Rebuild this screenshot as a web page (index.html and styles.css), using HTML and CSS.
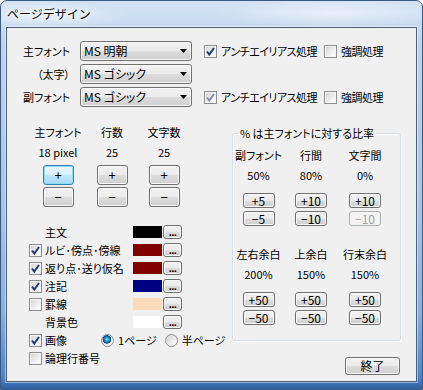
FILE: index.html
```html
<!DOCTYPE html>
<html lang="ja">
<head>
    <meta charset="UTF-8">
    <title>ページデザイン</title>
    <link rel="stylesheet" href="styles.css">
</head>
<body>
    <div class="window">
        <div class="titlebar">ページデザイン</div>
        <div class="client">
            <div class="fonts">
                <span class="lbl">主フォント</span>
                <div class="combo"><span>MS 明朝</span><svg width="7" height="4" viewBox="0 0 7 4"><path d="M0 0H7L3.5 4Z" fill="#000"/></svg></div>
                <label class="check"><span class="box"><svg width="11" height="11" viewBox="0 0 11 11"><path d="M2 5.5L4.3 8.5L9 2" fill="none" stroke="#1f3a73" stroke-width="2"/></svg></span>アンチエイリアス処理</label>
                <label class="check"><span class="box"></span>強調処理</label>

                <span class="lbl">（太字）</span>
                <div class="combo"><span>MS ゴシック</span><svg width="7" height="4" viewBox="0 0 7 4"><path d="M0 0H7L3.5 4Z" fill="#000"/></svg></div>
                <span></span>
                <span></span>

                <span class="lbl">副フォント</span>
                <div class="combo"><span>MS ゴシック</span><svg width="7" height="4" viewBox="0 0 7 4"><path d="M0 0H7L3.5 4Z" fill="#000"/></svg></div>
                <label class="check"><span class="box"><svg width="11" height="11" viewBox="0 0 11 11"><path d="M2 5.5L4.3 8.5L9 2" fill="none" stroke="#7f8fad" stroke-width="2"/></svg></span>アンチエイリアス処理</label>
                <label class="check"><span class="box"></span>強調処理</label>
            </div>

            <div class="main">
                <div class="left">
                    <div class="counters">
                        <span>主フォント</span>
                        <span>行数</span>
                        <span>文字数</span>
                        <span>18 pixel</span>
                        <span>25</span>
                        <span>25</span>
                        <div class="pair"><button class="btn big focus">+</button><button class="btn big">−</button></div>
                        <div class="pair"><button class="btn big">+</button><button class="btn big">−</button></div>
                        <div class="pair"><button class="btn big">+</button><button class="btn big">−</button></div>
                    </div>

                    <div class="colors">
                        <div class="row"><span class="slot"></span><span class="name">主文</span><span class="swatch" style="background:#000000"></span><button class="btn more">...</button></div>
                        <div class="row"><span class="slot"><span class="box"><svg width="11" height="11" viewBox="0 0 11 11"><path d="M2 5.5L4.3 8.5L9 2" fill="none" stroke="#1f3a73" stroke-width="2"/></svg></span></span><span class="name">ルビ･傍点･傍線</span><span class="swatch" style="background:#800000"></span><button class="btn more">...</button></div>
                        <div class="row"><span class="slot"><span class="box"><svg width="11" height="11" viewBox="0 0 11 11"><path d="M2 5.5L4.3 8.5L9 2" fill="none" stroke="#1f3a73" stroke-width="2"/></svg></span></span><span class="name">返り点･送り仮名</span><span class="swatch" style="background:#800000"></span><button class="btn more">...</button></div>
                        <div class="row"><span class="slot"><span class="box"><svg width="11" height="11" viewBox="0 0 11 11"><path d="M2 5.5L4.3 8.5L9 2" fill="none" stroke="#1f3a73" stroke-width="2"/></svg></span></span><span class="name">注記</span><span class="swatch" style="background:#000080"></span><button class="btn more">...</button></div>
                        <div class="row"><span class="slot"><span class="box"></span></span><span class="name">罫線</span><span class="swatch" style="background:#ffdab9"></span><button class="btn more">...</button></div>
                        <div class="row"><span class="slot"></span><span class="name">背景色</span><span class="swatch" style="background:#ffffff"></span><button class="btn more">...</button></div>
                        <div class="row"><span class="slot"><span class="box"><svg width="11" height="11" viewBox="0 0 11 11"><path d="M2 5.5L4.3 8.5L9 2" fill="none" stroke="#1f3a73" stroke-width="2"/></svg></span></span><span class="name short">画像</span><span class="radio on"></span><span class="opt">1ページ</span><span class="radio second"></span><span class="opt">半ページ</span></div>
                        <div class="row"><span class="slot"><span class="box"></span></span><span class="name">論理行番号</span></div>
                    </div>
                </div>

                <div class="right">
                    <fieldset class="ratio">
                        <legend>% は主フォントに対する比率</legend>
                        <div class="rgrid">
                            <span>副フォント</span>
                            <span>行間</span>
                            <span>文字間</span>
                            <span>50%</span>
                            <span>80%</span>
                            <span>0%</span>
                            <div class="pair"><button class="btn small">+5</button><button class="btn small">−5</button></div>
                            <div class="pair"><button class="btn small">+10</button><button class="btn small">−10</button></div>
                            <div class="pair"><button class="btn small">+10</button><button class="btn small" disabled>−10</button></div>
                        </div>
                        <div class="rgrid lower">
                            <span>左右余白</span>
                            <span>上余白</span>
                            <span>行末余白</span>
                            <span>200%</span>
                            <span>150%</span>
                            <span>150%</span>
                            <div class="pair"><button class="btn small">+50</button><button class="btn small">−50</button></div>
                            <div class="pair"><button class="btn small">+50</button><button class="btn small">−50</button></div>
                            <div class="pair"><button class="btn small">+50</button><button class="btn small">−50</button></div>
                        </div>
                    </fieldset>
                    <button class="btn close">終了</button>
                </div>
            </div>
        </div>
    </div>
</body>
</html>
```

FILE: styles.css
```css
body {
    margin: 0;
    background-color: #ffffff;
    font-family: "Noto Sans CJK JP", "Noto Sans", sans-serif;
    font-size: 11px;
    line-height: 16px;
    color: #000000;
    font-feature-settings: "palt";
    white-space: nowrap;
}
.window {
    width: 423px;
    height: 390px;
    box-sizing: border-box;
    border: 1px solid #3b5a82;
    border-radius: 7px 7px 0 0;
    padding: 0 5px 7px 5px;
    display: flex;
    flex-direction: column;
    background:
        radial-gradient(ellipse 120px 14px at 330px 12px, rgba(255, 255, 255, 0.55), rgba(255, 255, 255, 0)),
        radial-gradient(ellipse 90px 14px at 40px 14px, rgba(255, 255, 255, 0.6), rgba(255, 255, 255, 0)),
        linear-gradient(to bottom, #d3e3f4 0%, #bcd3ec 12%, #a9c6e8 50%, #88b0e0 80%, #4d84cf 97%, #2f5f9f 100%);
}
.titlebar {
    height: 26px;
    box-sizing: border-box;
    padding: 5px 0 0 1px;
    font-size: 12px;
    font-feature-settings: normal;
    text-shadow: 0 0 6px #ffffff, 0 0 3px #ffffff;
}
.client {
    flex: 1;
    border: 1px solid #4e6078;
    background-color: #f0f0f0;
    box-shadow: 0 0 0 1px rgba(255, 255, 255, 0.45);
}
.fonts {
    display: grid;
    grid-template-columns: 73px 124px 120px auto;
    grid-auto-rows: 20px;
    row-gap: 3px;
    margin-top: 13px;
    align-items: center;
}
.lbl {
    text-align: right;
    padding-right: 10px;
}
.combo {
    width: 112px;
    height: 20px;
    box-sizing: border-box;
    border: 1px solid #707070;
    border-radius: 3px;
    background: linear-gradient(to bottom, #f2f2f2 0%, #ebebeb 50%, #dddddd 51%, #cfcfcf 100%);
    box-shadow: inset 0 0 0 1px #fafafa;
    display: flex;
    align-items: center;
    justify-content: space-between;
    padding: 0 4px 0 3px;
    font-size: 12px;
}
.check {
    display: flex;
    align-items: center;
    gap: 4px;
    letter-spacing: -0.5px;
}
.box {
    width: 13px;
    height: 13px;
    box-sizing: border-box;
    border: 1px solid #8e8f8f;
    background: linear-gradient(135deg, #d4d4d4 0%, #f4f4f4 70%, #ffffff 100%);
    box-shadow: inset 0 0 0 1px #f4f4f4;
    display: flex;
    align-items: center;
    justify-content: center;
    flex-shrink: 0;
}
.main {
    display: flex;
    margin-top: 17px;
}
.left {
    width: 225px;
}
.counters {
    display: grid;
    grid-template-columns: 54px 54px 50px;
    justify-items: center;
    row-gap: 4px;
    margin-left: 24px;
}
.pair {
    display: flex;
    flex-direction: column;
    gap: 2px;
}
.counters .pair {
    margin-top: 1px;
}
.btn {
    box-sizing: border-box;
    border: 1px solid #707070;
    border-radius: 3px;
    background: linear-gradient(to bottom, #f2f2f2 0%, #ebebeb 50%, #dddddd 51%, #cfcfcf 100%);
    box-shadow: inset 0 0 0 1px #fafafa;
    font-family: inherit;
    font-size: 12px;
    line-height: 12px;
    color: #000000;
    padding: 0;
}
.btn.big {
    width: 31px;
    height: 20px;
    font-size: 13px;
}
.btn.focus {
    border-color: #3c7fb1;
    box-shadow: inset 0 0 0 1px #8fdcf5;
    background: linear-gradient(to bottom, #eaf6fd 0%, #d9f0fc 50%, #bee6fd 51%, #a7d9f5 100%);
}
.btn.small {
    width: 32px;
    height: 15px;
}
.btn:disabled {
    border-color: #adb2b5;
    background: #f4f4f4;
    box-shadow: none;
    color: #a0a0a0;
}
.colors {
    margin: 16px 0 0 22px;
}
.row {
    display: flex;
    align-items: center;
    height: 18px;
}
.slot {
    width: 16px;
}
.name {
    width: 88px;
}
.name.short {
    width: 56px;
}
.swatch {
    width: 29px;
    height: 12px;
}
.btn.more {
    width: 19px;
    height: 14px;
    margin-left: 1px;
    font-family: "Liberation Sans", sans-serif;
    font-weight: bold;
    font-size: 11px;
    line-height: 6px;
    letter-spacing: -0.5px;
}
.radio {
    width: 13px;
    height: 13px;
    box-sizing: border-box;
    border: 1px solid #8e8f8f;
    border-radius: 50%;
    background: linear-gradient(135deg, #d4d4d4 0%, #f6f6f6 80%);
}
.radio.on {
    background:
        radial-gradient(circle at 45% 40%, #aee6ff 0, #2b8fd6 2px, #0b4e8c 4px, rgba(11, 78, 140, 0) 4.5px),
        linear-gradient(135deg, #d4d4d4 0%, #f6f6f6 80%);
}
.radio.second {
    margin-left: 8px;
}
.opt {
    margin-left: 4px;
}
.right {
    width: 169px;
    display: flex;
    flex-direction: column;
}
.ratio {
    margin: 1px 0 0 0;
    padding: 6px 0 15px 0;
    border: 1px solid #d5dfe5;
    border-radius: 3px;
    box-shadow: 1px 1px 0 #ffffff, inset 1px 1px 0 #ffffff;
    min-width: 0;
}
.ratio legend {
    margin-left: 5px;
    padding: 0 2px;
}
.rgrid {
    display: grid;
    grid-template-columns: 51px 54px 54px;
    justify-items: center;
    row-gap: 4px;
}
.rgrid .pair {
    margin-top: 6px;
    gap: 3px;
}
.rgrid.lower {
    margin-top: 20px;
}
.btn.close {
    align-self: flex-end;
    width: 55px;
    height: 18px;
    margin: 16px 1px 0 0;
}
```
